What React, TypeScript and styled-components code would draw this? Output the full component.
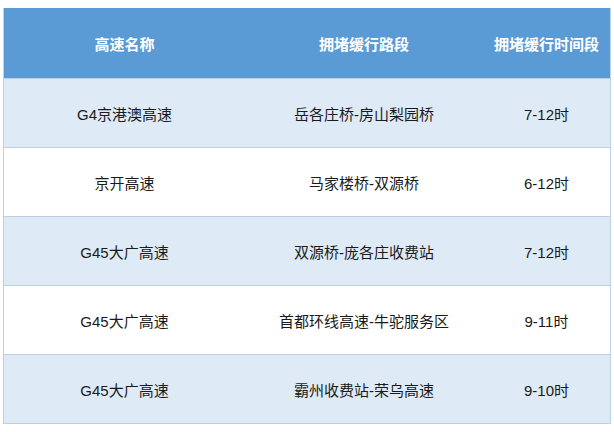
import styled, { createGlobalStyle } from "styled-components";

const GlobalStyle = createGlobalStyle`
  body {
    margin: 0;
    background: #ffffff;
    font-family: "Liberation Sans", "Noto Sans CJK SC", sans-serif;
  }
`;

const Page = styled.div`
  padding: 8px 3px 0 3px;
`;

const Table = styled.div`
  display: grid;
  grid-template-columns: 241px 238px 127px;
  width: max-content;
  border: 1px solid #bcd0e4;
  border-top: none;
`;

const HeadCell = styled.div`
  height: 70px;
  display: flex;
  align-items: center;
  justify-content: center;
  background: #5b9bd5;
  color: #ffffff;
  font-weight: bold;
  font-size: 15px;
  white-space: nowrap;
`;

const Cell = styled.div<{ $alt: boolean }>`
  height: 68px;
  display: flex;
  align-items: center;
  justify-content: center;
  background: ${({ $alt }) => ($alt ? "#deeaf6" : "#ffffff")};
  border-top: 1px solid #bcd0e4;
  color: #1a1a1a;
  font-size: 15px;
  white-space: nowrap;
`;

const rows = [
  ["G4京港澳高速", "岳各庄桥-房山梨园桥", "7-12时"],
  ["京开高速", "马家楼桥-双源桥", "6-12时"],
  ["G45大广高速", "双源桥-庞各庄收费站", "7-12时"],
  ["G45大广高速", "首都环线高速-牛驼服务区", "9-11时"],
  ["G45大广高速", "霸州收费站-荣乌高速", "9-10时"],
];

export default function App() {
  return (
    <Page>
      <GlobalStyle />
      <Table>
        <HeadCell>高速名称</HeadCell>
        <HeadCell>拥堵缓行路段</HeadCell>
        <HeadCell>拥堵缓行时间段</HeadCell>
        {rows.map((r, i) =>
          r.map((c, j) => (
            <Cell key={`${i}-${j}`} $alt={i % 2 === 0}>
              {c}
            </Cell>
          ))
        )}
      </Table>
    </Page>
  );
}
